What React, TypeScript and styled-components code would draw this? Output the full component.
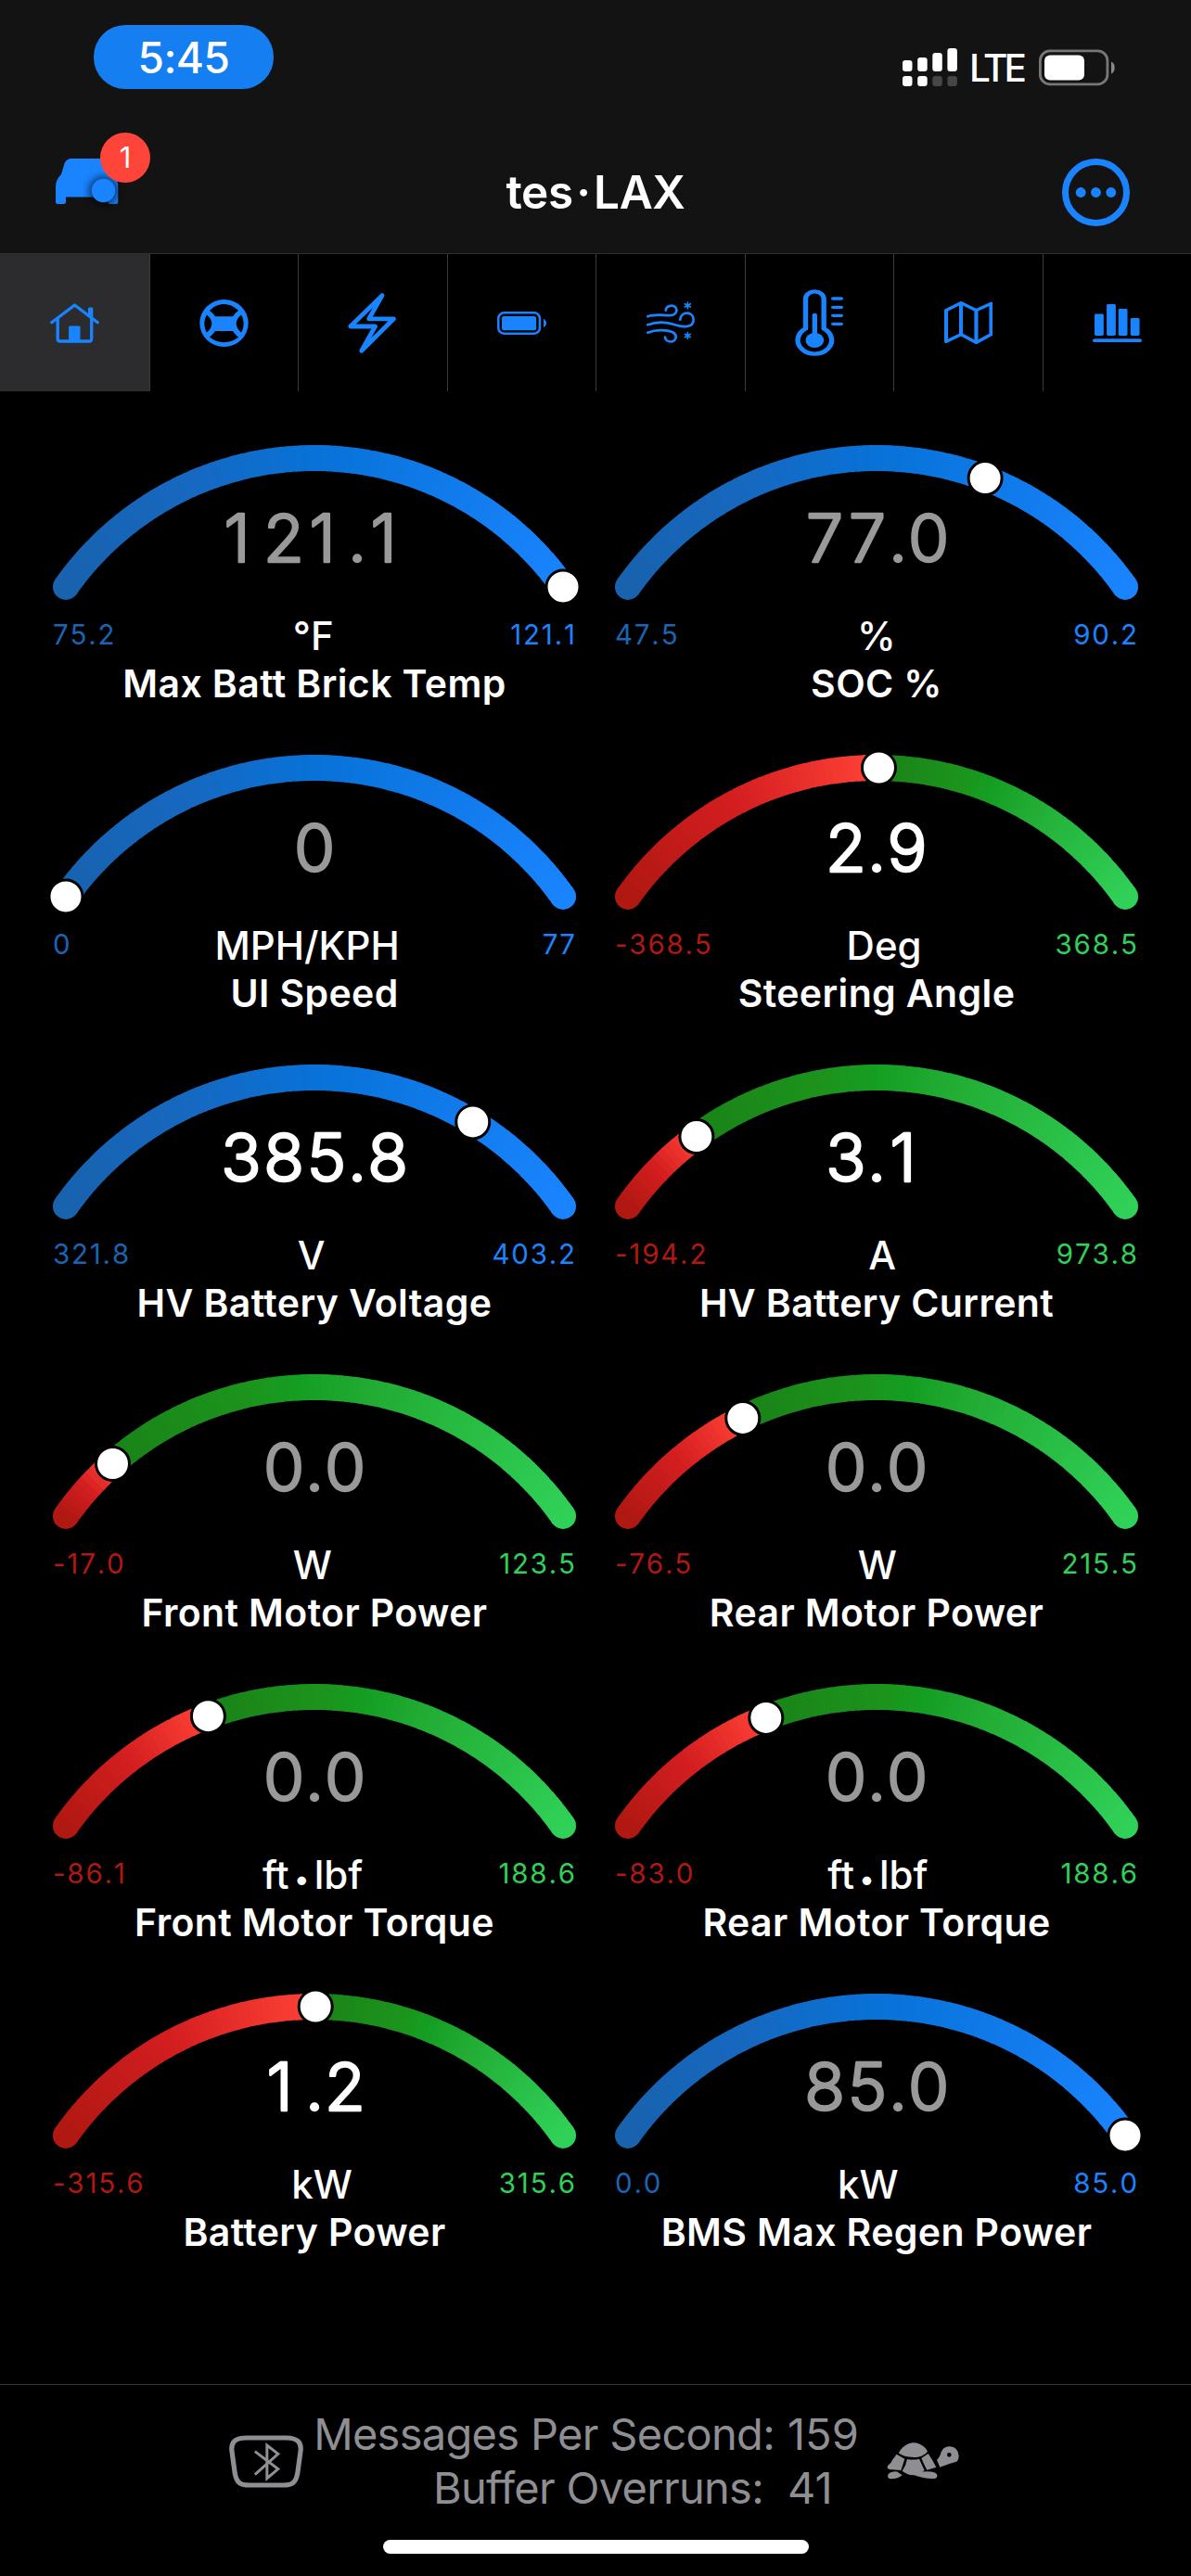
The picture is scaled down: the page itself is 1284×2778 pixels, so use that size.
import React from "react";
import styled, { createGlobalStyle } from "styled-components";

const BLUE = "#1a84ff";
const FONT = `Inter, "Noto Sans", "Liberation Sans", sans-serif`;

const GlobalStyle = createGlobalStyle`
  * { box-sizing: border-box; }
  body { margin: 0; background: #000; font-family: ${FONT}; }
  svg { display: block; }
`;

const Screen = styled.div`
  width: 1284px;
  height: 2778px;
  display: flex;
  flex-direction: column;
  background: #000;
  color: #fff;
  overflow: hidden;
`;

const Header = styled.header`
  height: 274px;
  flex: none;
  background: #131313;
  border-bottom: 1px solid #303030;
`;

const StatusBar = styled.div`
  height: 130px;
  padding: 27px 81px 0 101px;
  display: flex;
  justify-content: space-between;
  align-items: flex-start;
`;

const TimePill = styled.div`
  width: 194px;
  height: 69px;
  border-radius: 34px;
  background: #157ef0;
  font-size: 46px;
  font-weight: 500;
  letter-spacing: -0.5px;
  line-height: 71px;
  text-align: center;
`;

const StatusRight = styled.div`
  height: 92px;
  display: flex;
  align-items: center;
`;

const Carrier = styled.span`
  margin: 1px 16px 0 13px;
  width: 59px;
  font-size: 40.5px;
  font-weight: 500;
  letter-spacing: -4px;
  line-height: 44px;
`;

const NavBar = styled.div`
  height: 143px;
  padding: 12px 60px 0 60px;
  display: grid;
  grid-template-columns: 1fr auto 1fr;
  align-items: center;
`;

const CarButton = styled.div`
  position: relative;
  width: 68px;
  height: 50px;
  margin-top: -24px;
`;

const Badge = styled.span`
  position: absolute;
  left: 48px;
  top: -28px;
  width: 54px;
  height: 54px;
  border-radius: 50%;
  background: #ff453a;
  font-size: 31px;
  line-height: 54px;
  text-align: center;
`;

const Title = styled.h1`
  margin: 0;
  padding-bottom: 2px;
  font-size: 49.5px;
  font-weight: 600;
  letter-spacing: -0.4px;
  line-height: 60px;
`;

const TitleDot = styled.span`
  margin: 0 3.5px;
`;

const MenuButton = styled.div`
  justify-self: end;
  margin-right: 6px;
`;

const Tabs = styled.nav`
  height: 148px;
  flex: none;
  display: grid;
  grid-template-columns: repeat(8, 1fr);
`;

const Tab = styled.div<{ $active?: boolean }>`
  display: flex;
  align-items: center;
  justify-content: center;
  background: ${(p) => (p.$active ? "#2c2c2e" : "transparent")};
  border-left: 1px solid #39393b;
  color: ${BLUE};
  &:first-child { border-left: 0; }
`;

const GaugeGrid = styled.main`
  flex: 1;
  padding: 52px 57px 0;
  display: grid;
  grid-template-columns: 564px 564px;
  grid-auto-rows: 334px;
  column-gap: 42px;
`;

const GaugeCell = styled.section`
  display: flex;
  flex-direction: column;
`;

const Dial = styled.svg`
  width: 564px;
  height: 184px;
  overflow: visible;
`;

const ReadingText = styled.text<{ $dim: boolean }>`
  font-family: ${FONT};
  font-size: 71.5px;
  font-weight: 300;
  font-kerning: none;
  text-anchor: middle;
  fill: ${(p) => (p.$dim ? "#999" : "#fff")};
  stroke: ${(p) => (p.$dim ? "#999" : "#fff")};
  stroke-width: 2.6px;
  stroke-linejoin: round;
`;

const Scale = styled.div`
  height: 55px;
  display: flex;
  align-items: center;
  justify-content: space-between;
`;

const Bound = styled.span<{ $color: string }>`
  padding-bottom: 3px;
  font-size: 29.5px;
  font-kerning: none;
  letter-spacing: 1.8px;
  color: ${(p) => p.$color};
  &:last-child { margin-right: -0.8px; }
`;

const Unit = styled.span`
  font-size: 42px;
  font-weight: 500;
  letter-spacing: 0;
`;

const UnitDot = styled.span`
  margin: 0 5.5px;
  font-size: 30px;
`;

const Name = styled.div`
  height: 48px;
  line-height: 48px;
  text-align: center;
  font-size: 41px;
  font-weight: 600;
  letter-spacing: 0.38px;
  white-space: nowrap;
`;

const Footer = styled.footer`
  height: 207px;
  flex: none;
  border-top: 1px solid #39393b;
  display: flex;
  flex-direction: column;
  align-items: center;
  color: #8e8e93;
`;

const FooterRow = styled.div`
  height: 164px;
  width: 790px;
  margin-bottom: 3px;
  display: flex;
  align-items: center;
`;

const Stats = styled.div`
  margin-left: 14px;
  width: 615px;
  display: grid;
  grid-template-columns: 494px 1fr;
  grid-auto-rows: 58px;
  column-gap: 14px;
  font-size: 47px;
  line-height: 58px;
  white-space: nowrap;
`;

const StatLabel = styled.span<{ $inset?: number }>`
  display: flex;
  justify-content: flex-end;
  letter-spacing: -0.7px;
  padding-right: ${(p) => p.$inset ?? 0}px;
`;

const HomeIndicator = styled.div`
  width: 459px;
  height: 15px;
  border-radius: 8px;
  background: #fff;
`;

const SignalIcon = () => (
  <svg width="59" height="42" viewBox="0 0 59 42" fill="#fff">
    <rect x="0" y="13" width="10.5" height="12" rx="3" />
    <rect x="16.2" y="10" width="10.5" height="15" rx="3" />
    <rect x="32.3" y="5" width="10.5" height="20" rx="3" />
    <rect x="48.4" y="0" width="10.5" height="25" rx="3" />
    <rect x="0" y="30" width="10.5" height="11" rx="3" />
    <rect x="16.2" y="30" width="10.5" height="11" rx="3" />
    <rect x="32.3" y="30" width="10.5" height="11" rx="3" fill="#464646" />
    <rect x="48.4" y="30" width="10.5" height="11" rx="3" fill="#464646" />
  </svg>
);

const PhoneBatteryIcon = () => (
  <svg width="83" height="40" viewBox="0 0 83 40">
    <rect x="1.4" y="1.9" width="72.5" height="36" rx="10.5" fill="none" stroke="#777" strokeWidth="2.8" />
    <rect x="6" y="6.5" width="43" height="27" rx="6" fill="#fff" />
    <path d="M78 13.5c5 2 5 11 0 13z" fill="#888" />
  </svg>
);

const CarIcon = () => (
  <svg width="68" height="50" viewBox="0 0 68 50" overflow="visible">
    <defs>
      <filter id="dotShadow" x="-60%" y="-60%" width="220%" height="220%">
        <feGaussianBlur stdDeviation="4.5" />
      </filter>
      <clipPath id="shadowClip">
        <rect x="30" y="14" width="50" height="50" />
      </clipPath>
    </defs>
    <path
      fill={BLUE}
      d="M17 0H51C55 0 57 2 58.5 6L62 17C66 21 67.3 25 67.3 30V46.500Q67.300 49 64.500 49H59Q56.500 49 56.500 46.500V41.500H11V46.500Q11 49 8.500 49H2.500Q0 49 0 46.500V30C0 25 2 21 6 17L9 7C10.500 2 13 0 17 0Z"
    />
    <g clipPath="url(#shadowClip)">
      <circle cx="51.500" cy="35" r="15.500" fill="#000" opacity="0.6" filter="url(#dotShadow)" />
    </g>
    <circle cx="51.500" cy="34.500" r="12.700" fill={BLUE} />
  </svg>
);

const MoreIcon = () => (
  <svg width="73" height="73" viewBox="0 0 73 73" fill={BLUE}>
    <circle cx="36.500" cy="36.500" r="33" fill="none" stroke={BLUE} strokeWidth="7" />
    <circle cx="20.200" cy="36.500" r="5.400" />
    <circle cx="36.500" cy="36.500" r="5.400" />
    <circle cx="52.800" cy="36.500" r="5.400" />
  </svg>
);

const HomeIcon = () => (
  <svg width="53" height="43" viewBox="0 0 53 43" fill="none" stroke="currentColor" strokeWidth="3.300" strokeLinecap="round" strokeLinejoin="round">
    <path d="M1.800 20.800L26.500 2L51.200 20.800" />
    <path d="M8.200 17V38.500Q8.200 41 11 41H42Q44.700 41 44.700 38.500V17" />
    <path d="M41 13V6Q41 4.500 42.300 4.500H45Q46.300 4.500 46.300 6V17Z" fill="currentColor" stroke="none" />
    <path d="M20.100 41V26Q20.100 24.500 21.600 24.500H31Q32.500 24.500 32.500 26V41Z" fill="currentColor" stroke="none" />
  </svg>
);

const WheelIcon = () => (
  <svg width="53" height="51" viewBox="-26.500 -25.500 53 51" preserveAspectRatio="none">
    <ellipse rx="26.200" ry="25.500" fill="currentColor" />
    <g fill="#000">
      <path d="M-15.500 -13.500C-7 -23 7 -23 15.500 -13.500Q11.500 -10.500 9.500 -7.300H-9.500Q-11.500 -10.500 -15.500 -13.500Z" />
      <path d="M-15.500 15C-7 22.600 7 22.600 15.500 15Q11.500 12 9.500 8.600H-9.500Q-11.500 12 -15.500 15Z" />
      <path d="M-18.500 -9C-22 -4 -22 5 -18.500 10Q-13.200 5.500 -13.200 0.500Q-13.200 -4.500 -18.500 -9Z" />
      <path d="M18.500 -9C22 -4 22 5 18.500 10Q13.200 5.500 13.200 0.500Q13.200 -4.500 18.500 -9Z" />
    </g>
  </svg>
);

const BoltIcon = () => (
  <svg width="53" height="65" viewBox="0 0 53 65" fill="none" stroke="currentColor" strokeWidth="4.800" strokeLinejoin="round">
    <path d="M37 2.600L22.800 27.800H49.500L14.800 62.200L29.500 36H2.800Z" />
  </svg>
);

const BatteryIcon = () => (
  <svg width="53" height="25" viewBox="0 0 53 25">
    <rect x="1.300" y="1.300" width="44.600" height="22.400" rx="6" fill="none" stroke="currentColor" strokeWidth="2.500" />
    <rect x="5" y="4.900" width="37.200" height="15.400" rx="2.500" fill="currentColor" />
    <path d="M50 8C54 9.500 54 15.500 50 17Z" fill="currentColor" />
  </svg>
);

const WindIcon = () => (
  <svg width="52" height="46" viewBox="18 24 156 136" fill="none" stroke="currentColor" strokeWidth="8" strokeLinecap="round">
    <path d="M22 72C50 62 78 70 98 68C122 65 120 36 98 37C88 38 81 43 80 52" />
    <path d="M22 99C55 87 85 90 110 99C135 107 170 109 170 82C170 55 129 53 127 82" />
    <path d="M22 124C50 113 113 112 113 138C112 159 79 158 78 139" />
    <path strokeWidth="5" d="M151 26V46M142 31L160 41M142 41L160 31M151 124V144M142 129L160 139M142 139L160 129" />
  </svg>
);

const ThermometerIcon = () => (
  <svg width="52.500" height="72" viewBox="525 126 128 216" preserveAspectRatio="none" fill="none" stroke="currentColor" strokeWidth="13" strokeLinecap="round">
    <path d="M553 253V157A24 24 0 0 1 601 157V253A44.500 44.500 0 1 1 553 253Z" />
    <circle cx="577" cy="291" r="24" fill="currentColor" stroke="none" />
    <path d="M577 210V291" />
    <path strokeWidth="10" d="M625 156H647M625 184H647M625 211H647M625 238H647" />
  </svg>
);

const MapIcon = () => (
  <svg width="52.500" height="46" viewBox="916 165 128 138" preserveAspectRatio="none" fill="none" stroke="currentColor" strokeWidth="10" strokeLinejoin="round">
    <path d="M921 194L960 170L1000 194L1039 172V272L1000 298L960 272L921 295Z" />
    <path d="M960 170V272M1000 194V298" />
  </svg>
);

const BarsIcon = () => (
  <svg width="53" height="41" viewBox="1309 172 130 122" preserveAspectRatio="none" fill="currentColor">
    <rect x="1314" y="203" width="24" height="70" rx="4" />
    <rect x="1346" y="172" width="24" height="101" rx="4" />
    <rect x="1377" y="187" width="24" height="86" rx="4" />
    <rect x="1409" y="217" width="24" height="56" rx="4" />
    <rect x="1309" y="283" width="130" height="11" rx="5.500" />
  </svg>
);

const BluetoothIcon = () => (
  <svg width="80" height="57" viewBox="83 258 141 171" preserveAspectRatio="none" fill="none" stroke="currentColor">
    <path vectorEffect="non-scaling-stroke" strokeWidth="5.200" d="M116 267H191C215 267 220 285 219 307L213 382C210 410 204 420 186 420H121C103 420 97 410 94 382L88 307C87 285 92 267 116 267Z" />
    <path vectorEffect="non-scaling-stroke" strokeWidth="3" d="M132 311L176 368L155 398V291L176 319L132 386" />
  </svg>
);

const TurtleIcon = () => (
  <svg width="78" height="40" viewBox="30 44 234 120" fill="currentColor">
    <path d="M68 78C85 50 105 45 118 45C140 46 155 60 162 73C150 88 135 91 118 92C95 92 80 87 68 78Z" />
    <path d="M62 82L88 97Q82 115 76 134L38 131Q28 128 34 118Q45 110 50 98Z" />
    <path d="M96 98Q115 102 135 97L152 134Q135 150 115 150Q95 148 80 136Q92 120 96 98Z" />
    <path d="M142 95L164 80Q178 100 190 124L160 133Q150 115 142 95Z" />
    <path fillRule="evenodd" d="M192 100Q202 92 206 75Q215 56 235 57Q262 60 263 88Q263 105 250 108Q225 115 202 124ZM232 77A7 7 0 1 0 232 91A7 7 0 1 0 232 77Z" />
    <path d="M34 148Q42 138 62 138L80 150Q66 162 45 162Q30 160 34 148Z" />
    <path d="M119 150Q135 138 160 138Q185 138 193 148Q195 160 182 161Q150 162 119 150Z" />
  </svg>
);

type Rgb = [number, number, number];
type Stop = [number, Rgb];

const BLUE_RAMP: Stop[] = [
  [0, [24, 98, 174]],
  [0.28, [22, 104, 192]],
  [0.5, [8, 114, 216]],
  [0.78, [18, 124, 238]],
  [1, [26, 132, 255]],
];
const RED_RAMP: Stop[] = [
  [0, [176, 24, 18]],
  [0.5, [212, 30, 32]],
  [1, [255, 66, 54]],
];
const GREEN_RAMP: Stop[] = [
  [0, [26, 130, 24]],
  [0.3, [28, 148, 28]],
  [0.4, [20, 158, 34]],
  [0.55, [34, 172, 52]],
  [1, [48, 209, 88]],
];

const colorAt = (ramp: Stop[], t: number) => {
  const i = Math.max(1, ramp.findIndex(([pos]) => pos >= t));
  const [p0, a] = ramp[i - 1];
  const [p1, b] = ramp[i];
  const k = (t - p0) / (p1 - p0);
  return `rgb(${a.map((c, n) => Math.round(c + (b[n] - c) * k)).join(",")})`;
};

const CX = 282;
const CY = 348;
const R = 328;
const HALF_SWEEP = 54.8;

const pointAt = (t: number) => {
  const a = ((t * 2 - 1) * HALF_SWEEP * Math.PI) / 180;
  return [CX + R * Math.sin(a), CY - R * Math.cos(a)];
};

const arc = (from: number, to: number) => {
  const [x0, y0] = pointAt(from);
  const [x1, y1] = pointAt(to);
  return `M${x0.toFixed(2)} ${y0.toFixed(2)}A${R} ${R} 0 0 1 ${x1.toFixed(2)} ${y1.toFixed(2)}`;
};

const DIGIT_ADVANCE = 46;
const POINT_ADVANCE = 20;

const glyphCenters = (value: string) => {
  const advances = [...value].map((c) => (c === "." ? POINT_ADVANCE : DIGIT_ADVANCE));
  let x = CX - advances.reduce((sum, a) => sum + a, 0) / 2;
  return advances
    .map((a, i) => {
      const center = x + a / 2 - (value[i] === "1" ? 4.5 : 0);
      x += a;
      return center;
    })
    .join(" ");
};

interface GaugeData {
  name: string;
  unit: string;
  min: string;
  max: string;
  value: string;
  dim?: boolean;
}

const STEPS = 90;

const UnitLabel = ({ unit }: { unit: string }) => {
  const [head, tail] = unit.split("•");
  return (
    <Unit>
      {head}
      {tail && <UnitDot>•</UnitDot>}
      {tail}
    </Unit>
  );
};

const Gauge = ({ name, unit, min, max, value, dim = false }: GaugeData) => {
  const lo = Number(min);
  const hi = Number(max);
  const signed = lo < 0;
  const zero = signed ? -lo / (hi - lo) : 0;
  const position = (Number(value) - lo) / (hi - lo);
  const shade = (t: number) => {
    if (!signed) return colorAt(BLUE_RAMP, t);
    return t < zero ? colorAt(RED_RAMP, t / zero) : colorAt(GREEN_RAMP, (t - zero) / (1 - zero));
  };
  const [lx, ly] = pointAt(0);
  const [rx, ry] = pointAt(1);
  const [kx, ky] = pointAt(position);
  return (
    <GaugeCell>
      <Dial viewBox="0 0 564 184">
        <circle cx={lx} cy={ly} r="14" fill={shade(0)} />
        <circle cx={rx} cy={ry} r="14" fill={shade(1)} />
        {Array.from({ length: STEPS }, (_, i) => (
          <path
            key={i}
            d={arc(i / STEPS, Math.min(1, (i + 1.15) / STEPS))}
            fill="none"
            stroke={shade((i + 0.5) / STEPS)}
            strokeWidth="28"
          />
        ))}
        <circle cx={kx} cy={ky} r="18" fill="#fff" stroke="#000" strokeWidth="3" />
        <ReadingText x={glyphCenters(value)} y="132" $dim={dim}>{value}</ReadingText>
      </Dial>
      <Scale>
        <Bound $color={signed ? "#b01812" : "#1865b3"}>{min}</Bound>
        <UnitLabel unit={unit} />
        <Bound $color={signed ? "#30d158" : BLUE}>{max}</Bound>
      </Scale>
      <Name>{name}</Name>
    </GaugeCell>
  );
};

const GAUGES: GaugeData[] = [
  { name: "Max Batt Brick Temp", unit: "°F", min: "75.2", max: "121.1", value: "121.1", dim: true },
  { name: "SOC %", unit: "%", min: "47.5", max: "90.2", value: "77.0", dim: true },
  { name: "UI Speed", unit: "MPH/KPH", min: "0", max: "77", value: "0", dim: true },
  { name: "Steering Angle", unit: "Deg", min: "-368.5", max: "368.5", value: "2.9" },
  { name: "HV Battery Voltage", unit: "V", min: "321.8", max: "403.2", value: "385.8" },
  { name: "HV Battery Current", unit: "A", min: "-194.2", max: "973.8", value: "3.1" },
  { name: "Front Motor Power", unit: "W", min: "-17.0", max: "123.5", value: "0.0", dim: true },
  { name: "Rear Motor Power", unit: "W", min: "-76.5", max: "215.5", value: "0.0", dim: true },
  { name: "Front Motor Torque", unit: "ft•lbf", min: "-86.1", max: "188.6", value: "0.0", dim: true },
  { name: "Rear Motor Torque", unit: "ft•lbf", min: "-83.0", max: "188.6", value: "0.0", dim: true },
  { name: "Battery Power", unit: "kW", min: "-315.6", max: "315.6", value: "1.2" },
  { name: "BMS Max Regen Power", unit: "kW", min: "0.0", max: "85.0", value: "85.0", dim: true },
];

const TAB_ICONS = [HomeIcon, WheelIcon, BoltIcon, BatteryIcon, WindIcon, ThermometerIcon, MapIcon, BarsIcon];

export default function App() {
  return (
    <>
      <GlobalStyle />
      <Screen>
        <Header>
          <StatusBar>
            <TimePill>5:45</TimePill>
            <StatusRight>
              <SignalIcon />
              <Carrier>LTE</Carrier>
              <PhoneBatteryIcon />
            </StatusRight>
          </StatusBar>
          <NavBar>
            <CarButton>
              <CarIcon />
              <Badge>1</Badge>
            </CarButton>
            <Title>
              tes<TitleDot>·</TitleDot>LAX
            </Title>
            <MenuButton>
              <MoreIcon />
            </MenuButton>
          </NavBar>
        </Header>
        <Tabs>
          {TAB_ICONS.map((Icon, i) => (
            <Tab key={i} $active={i === 0}>
              <Icon />
            </Tab>
          ))}
        </Tabs>
        <GaugeGrid>
          {GAUGES.map((g) => (
            <Gauge key={g.name} {...g} />
          ))}
        </GaugeGrid>
        <Footer>
          <FooterRow>
            <BluetoothIcon />
            <Stats>
              <StatLabel>Messages Per Second:</StatLabel>
              <span>159</span>
              <StatLabel $inset={12}>Buffer Overruns:</StatLabel>
              <span>41</span>
            </Stats>
            <TurtleIcon />
          </FooterRow>
          <HomeIndicator />
        </Footer>
      </Screen>
    </>
  );
}
